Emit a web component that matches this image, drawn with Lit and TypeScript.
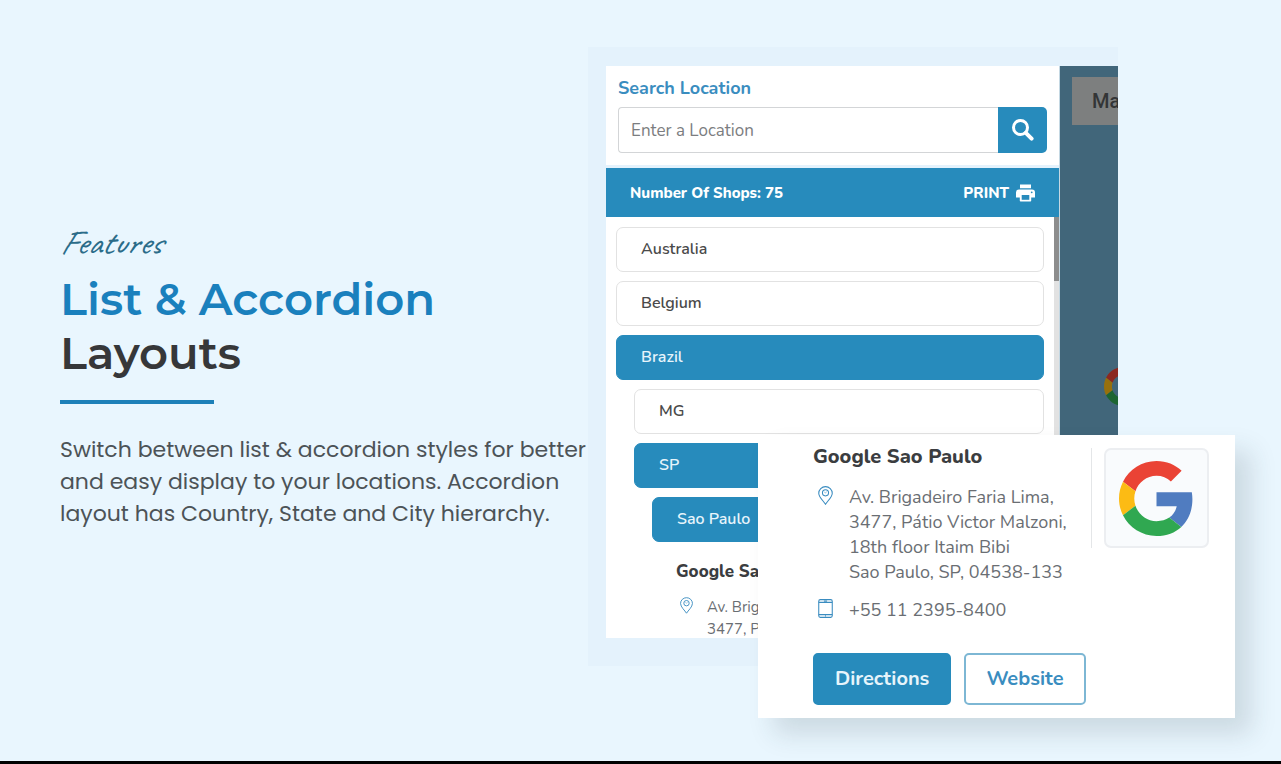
import { LitElement, html, css, svg } from "lit";
import { customElement } from "lit/decorators.js";
import { classMap } from "lit/directives/class-map.js";

type Entry = { name: string; level: 0 | 1 | 2; open?: boolean };

const ENTRIES: Entry[] = [
  { name: "Australia", level: 0 },
  { name: "Belgium", level: 0 },
  { name: "Brazil", level: 0, open: true },
  { name: "MG", level: 1 },
  { name: "SP", level: 1, open: true },
  { name: "Sao Paulo", level: 2, open: true },
];

const googleG = svg`
  <path fill="#ea4335" d="M24 9.5c3.54 0 6.71 1.22 9.21 3.6l6.85-6.85C35.9 2.38 30.47 0 24 0 14.62 0 6.51 5.38 2.56 13.22l7.98 6.19C12.43 13.72 17.74 9.5 24 9.5z"/>
  <path fill="#507cc0" d="M46.98 24.55c0-1.57-.15-3.09-.38-4.55H24v9.02h12.94c-.58 2.96-2.26 5.48-4.78 7.18l7.73 6c4.51-4.18 7.09-10.36 7.09-17.65z"/>
  <path fill="#fcbb14" d="M10.53 28.59c-.48-1.45-.76-2.99-.76-4.59s.27-3.14.76-4.59l-7.98-6.19C.92 16.46 0 20.12 0 24c0 3.88.92 7.54 2.56 10.78l7.97-6.19z"/>
  <path fill="#30a851" d="M24 48c6.48 0 11.93-2.13 15.89-5.81l-7.73-6c-2.15 1.45-4.92 2.3-8.16 2.3-6.26 0-11.57-4.22-13.47-9.91l-7.98 6.19C6.51 42.62 14.62 48 24 48z"/>`;

const pinIcon = html`<svg class="icon" viewBox="0 0 14 18" fill="none" stroke="#3a8cc0" aria-hidden="true">
  <path d="M7 17.3C5.2 14.3.6 10.600.6 6.800a6.400 6.200 0 0 1 12.800 0C13.400 10.600 8.800 14.300 7 17.300z"/>
  <circle cx="7" cy="6.500" r="2.900"/>
  <path d="M5.800 5.700l1 .8 1.400-1" stroke-width=".5"/>
</svg>`;

const phoneIcon = html`<svg class="icon" viewBox="0 0 14 18" fill="none" stroke="#3a8cc0" aria-hidden="true">
  <rect x=".6" y=".6" width="12.800" height="16.800" rx="1.500"/>
  <path d="M.6 3.200h12.800M.6 14.800h12.800M5.500 1.900h3M6.500 16.100h1"/>
</svg>`;

@customElement("app-root")
export class AppRoot extends LitElement {
  static styles = css`
    :host {
      display: block;
      --blue: #278bbc;
      --panel-font: Nunito, "Open Sans", "Noto Sans", sans-serif;
    }
    * { box-sizing: border-box; }
    h1, h2, h3, p, address { margin: 0; font-style: normal; }
    button, input { font-family: inherit; }
    button { cursor: pointer; }

    .page {
      min-height: 100vh;
      display: grid;
      grid-template-columns: minmax(0, 1fr) minmax(0, 647px);
      background: #e9f6fe;
      border-bottom: 3px solid #000;
      padding: 47px 46px 43px 60px;
      overflow: hidden;
    }

    .intro { padding-top: 178px; }
    .kicker {
      font: italic 400 35px/36px "Bradley Hand", Caveat, Lato, cursive;
      color: #2b6c89;
    }
    .title {
      margin-top: 11px;
      font: 600 45px/54px Montserrat, Inter, sans-serif;
      color: #363739;
    }
    .title span { display: block; color: #1a80bd; }
    .rule { width: 154px; height: 4px; margin: 20px 0 30px; background: #1d80b8; }
    .lead {
      font: 400 22px/32px Poppins, Inter, sans-serif;
      color: #4c5357;
      white-space: nowrap;
    }

    .stage { position: relative; font-family: var(--panel-font); }
    .device {
      display: flex;
      margin-right: 117px;
      padding: 19px 0 28px 18px;
      background: #e4f2fc;
    }
    .panel { flex: 1; min-width: 0; }

    .search { display: block; background: #fff; padding: 11px 12px 12px; }
    .search label {
      display: block;
      font-size: 18px;
      line-height: 22px;
      font-weight: 700;
      color: #3a8dbf;
      margin-bottom: 8px;
    }
    .field { display: flex; height: 46px; }
    .field input {
      flex: 1;
      min-width: 0;
      border: 1px solid #d3d5d7;
      border-right: 0;
      border-radius: 4px 0 0 4px;
      padding: 0 12px;
      font-size: 17px;
      color: #444;
      background: #fff;
    }
    .field input::placeholder { color: #7b7d80; opacity: 1; }
    .field button {
      width: 49px;
      display: grid;
      place-items: center;
      padding: 0;
      border: 0;
      border-radius: 0 5px 5px 0;
      background: var(--blue);
    }

    .bar {
      display: flex;
      justify-content: space-between;
      align-items: center;
      height: 49px;
      margin-top: 3px;
      padding: 0 24px;
      background: var(--blue);
      color: #fff;
      font-size: 15px;
      font-weight: 800;
    }
    .print {
      display: flex;
      align-items: center;
      gap: 7px;
      padding: 0;
      border: 0;
      background: none;
      color: inherit;
      font-size: inherit;
      font-weight: inherit;
    }

    .results { display: flex; height: 421px; overflow: hidden; background: #fff; }
    .list { flex: 1; min-width: 0; padding: 10px; display: grid; gap: 9px; align-content: start; }
    .item {
      height: 45px;
      padding: 0 24px 2px;
      text-align: left;
      font-size: 16px;
      font-weight: 600;
      border: 1px solid #e2e2e2;
      border-radius: 7px;
      background: #fff;
      color: #4a4a4a;
    }
    .item.l1 { margin-left: 18px; }
    .item.l2 { margin-left: 36px; }
    .item.open { background: var(--blue); border-color: var(--blue); color: #e6f4fb; }
    .scroll { width: 5px; background: #e2e2e2; }
    .thumb { height: 64px; background: #8d8d8d; }

    .shop { margin-left: 60px; color: #6a6e73; white-space: nowrap; }
    .shop h3 { font-size: 17px; line-height: 42px; font-weight: 800; color: #3b3d40; margin-bottom: 3px; }
    .shop .row { font-size: 15px; line-height: 22px; padding-left: 4px; gap: 14px; }
    .shop .icon { width: 13px; height: 17px; margin-top: 1px; }
    .row { display: flex; align-items: flex-start; }
    .icon { flex: none; }

    .map {
      position: relative;
      width: 59px;
      overflow: hidden;
      border-left: 1px solid #c4d8e3;
      background: #41667a;
    }
    .maptype {
      position: absolute;
      left: 12px;
      top: 11px;
      height: 48px;
      padding: 0 20px;
      border: 0;
      background: #7d7f7f;
      color: #333536;
      font: 500 20px Roboto, sans-serif;
    }
    .marker { position: absolute; left: 44px; top: 301px; width: 39px; height: 39px; filter: brightness(0.6); }

    .card {
      position: absolute;
      right: 0;
      top: 388px;
      width: 477px;
      padding: 13px 26px 13px 55px;
      background: #fff;
      box-shadow: 16px 16px 24px rgba(40, 60, 70, 0.15);
      color: #6a6e73;
    }
    .top { display: flex; justify-content: space-between; }
    .card h2 { font-size: 20px; line-height: 18px; font-weight: 800; color: #3b3d40; margin-bottom: 19px; }
    .card .row { font-size: 18px; line-height: 25px; padding-left: 5px; gap: 16px; white-space: nowrap; }
    .card .icon { width: 15px; height: 19px; margin-top: 1px; }
    .card .phone { margin-top: 13px; }
    .brand { height: 100px; padding-left: 12px; border-left: 1px solid #e4e6e8; }
    .logo {
      display: grid;
      place-items: center;
      width: 105px;
      height: 100px;
      border: 2px solid #eceef1;
      border-radius: 7px;
      background: #f9fbfd;
    }
    .actions { display: flex; gap: 13px; margin-top: 30px; }
    .btn {
      height: 52px;
      padding: 0 20px 2px;
      border: 2px solid #7db7d4;
      border-radius: 5px;
      background: #fff;
      color: #3a8dbf;
      font-size: 20px;
      font-weight: 700;
      display: flex;
      align-items: center;
      text-decoration: none;
    }
    .btn.solid { background: var(--blue); border-color: var(--blue); color: #e6f4fb; }
  `;

  render() {
    return html`
      <main class="page">
        <section class="intro">
          <p class="kicker">Features</p>
          <h1 class="title"><span>List &amp; Accordion</span>Layouts</h1>
          <div class="rule"></div>
          <p class="lead">
            Switch between list &amp; accordion styles for better<br />and easy display to your
            locations. Accordion<br />layout has Country, State and City hierarchy.
          </p>
        </section>

        <section class="stage">
          <div class="device">
            <div class="panel">
              <form class="search" @submit=${(e: Event) => e.preventDefault()}>
                <label for="location">Search Location</label>
                <div class="field">
                  <input id="location" type="text" placeholder="Enter a Location" />
                  <button type="submit" aria-label="Search">
                    <svg width="22" height="22" viewBox="0 0 22 22" fill="none" stroke="#fff" aria-hidden="true">
                      <circle cx="8.500" cy="8.500" r="7" stroke-width="3" />
                      <path d="M13.800 13.800l5.800 5.800" stroke-width="4" stroke-linecap="round" />
                    </svg>
                  </button>
                </div>
              </form>
              <div class="bar">
                <span>Number Of Shops: 75</span>
                <button class="print" type="button">
                  PRINT
                  <svg width="19" height="18" viewBox="0 0 19 18" aria-hidden="true">
                    <path fill="#fff" d="M4 .5h11v3.800H4zM3 5.500h13a3 3 0 0 1 3 3v5h-3.800v3.200a.8.800 0 0 1-.8.800H4.600a.8.800 0 0 1-.8-.8v-3.200H0v-5a3 3 0 0 1 3-3z" />
                    <path fill="#278bbc" d="M5.700 11h7.600v4.800H5.700z" />
                    <circle cx="15.700" cy="8.300" r=".9" fill="#278bbc" />
                  </svg>
                </button>
              </div>
              <div class="results">
                <div class="list">
                  ${ENTRIES.map(
                    (e) => html`<button
                      type="button"
                      class=${classMap({ item: true, open: !!e.open, l1: e.level === 1, l2: e.level === 2 })}
                      aria-expanded=${e.open ? "true" : "false"}
                    >${e.name}</button>`
                  )}
                  <article class="shop">
                    <h3>Google Sao Paulo</h3>
                    <div class="row">
                      ${pinIcon}
                      <address>Av. Brigadeiro Faria Lima,<br />3477, Pátio Victor Malzoni,</address>
                    </div>
                  </article>
                </div>
                <div class="scroll"><div class="thumb"></div></div>
              </div>
            </div>
            <div class="map">
              <button class="maptype" type="button">Map</button>
              <svg class="marker" viewBox="0 0 48 48" aria-hidden="true">${googleG}</svg>
            </div>
          </div>

          <article class="card">
            <div class="top">
              <div>
                <h2>Google Sao Paulo</h2>
                <div class="row">
                  ${pinIcon}
                  <address>
                    Av. Brigadeiro Faria Lima,<br />3477, Pátio Victor Malzoni,<br />18th floor Itaim Bibi<br />Sao
                    Paulo, SP, 04538-133
                  </address>
                </div>
                <div class="row phone">${phoneIcon}<span>+55 11 2395-8400</span></div>
              </div>
              <div class="brand">
                <div class="logo">
                  <svg width="75" height="75" viewBox="0 0 48 48" role="img" aria-label="Google">${googleG}</svg>
                </div>
              </div>
            </div>
            <div class="actions">
              <a class="btn solid" href="#directions">Directions</a>
              <a class="btn" href="#website">Website</a>
            </div>
          </article>
        </section>
      </main>
    `;
  }
}
